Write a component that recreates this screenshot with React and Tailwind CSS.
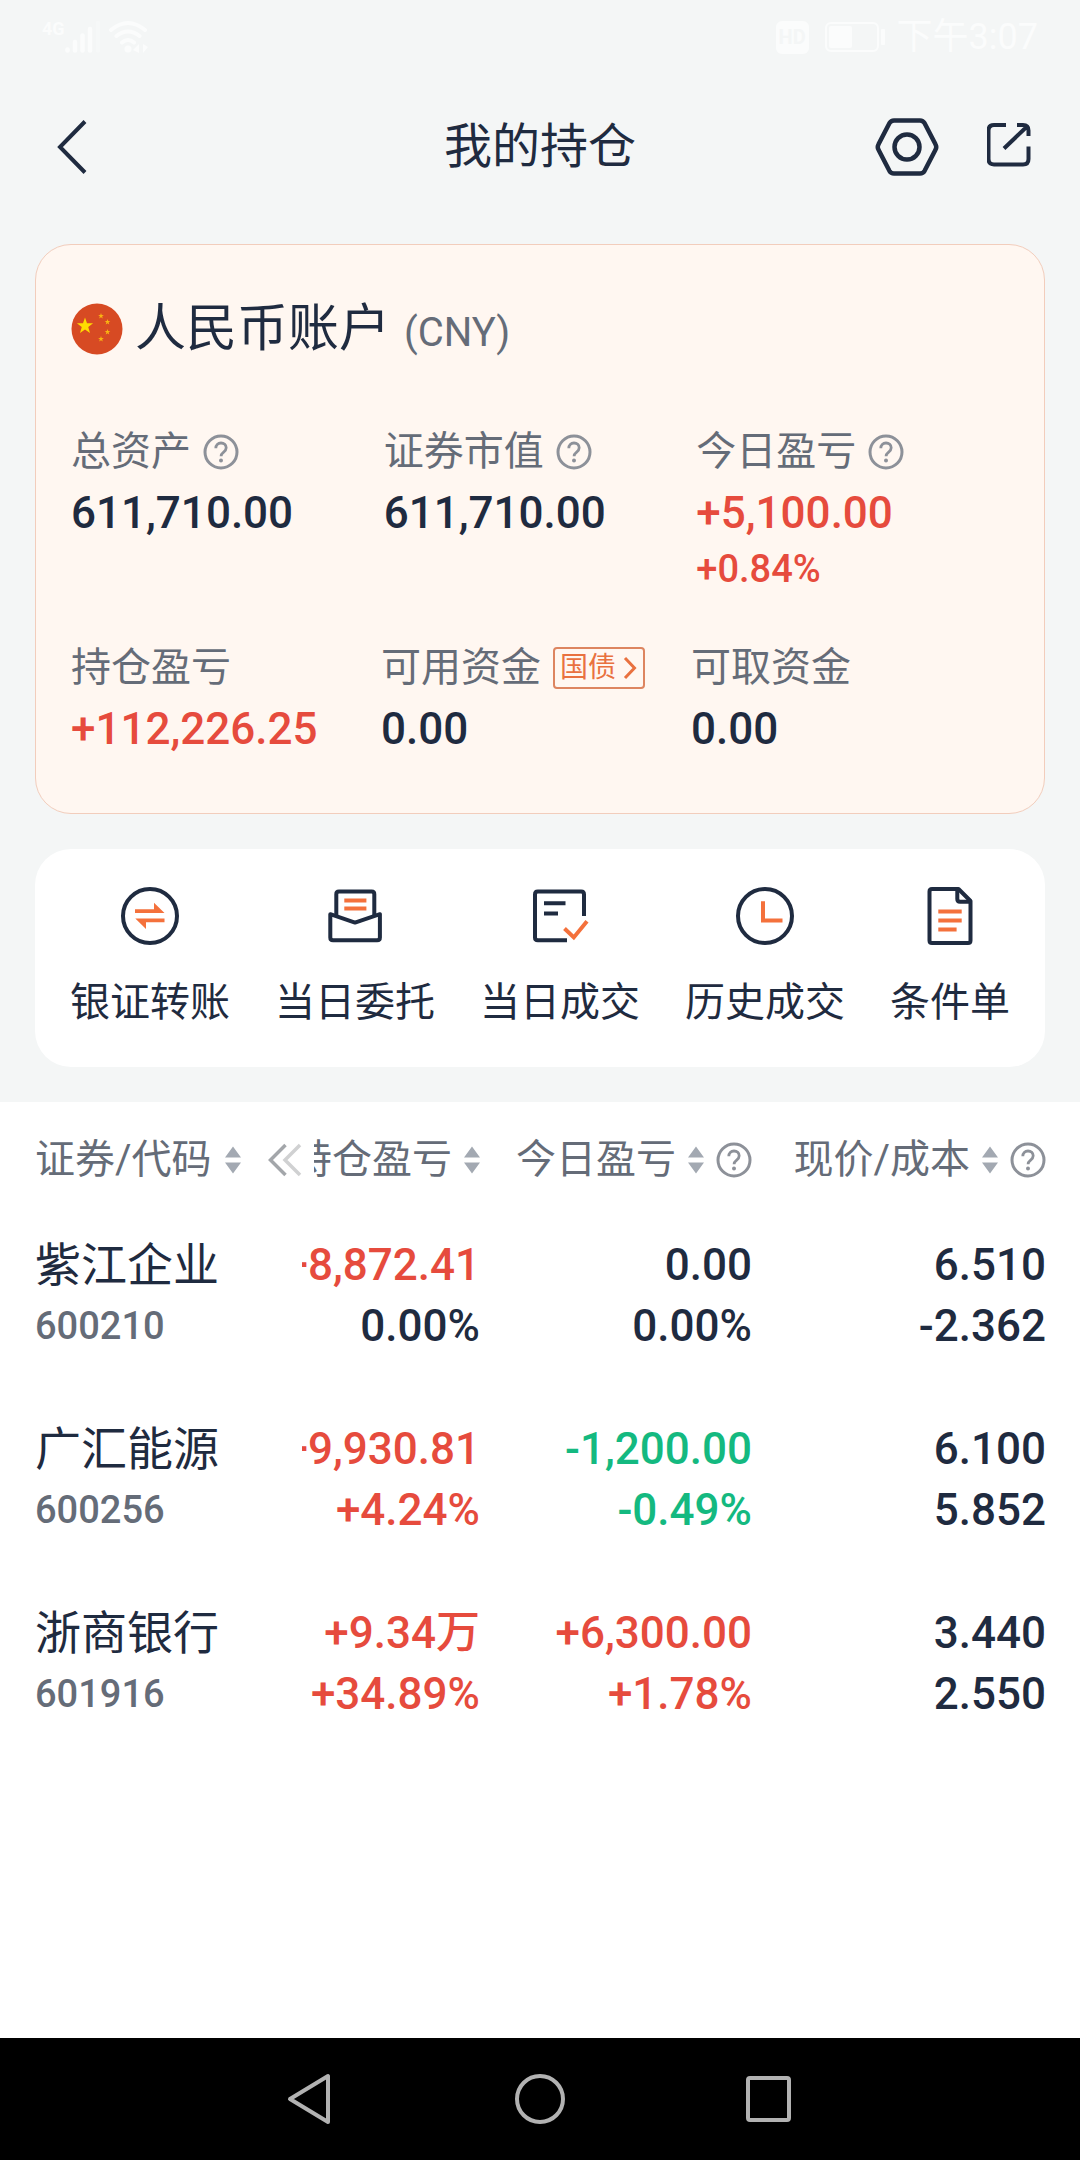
import React from "react";

const metricsTop = [
  { label: "总资产", value: "611,710.00", help: true },
  { label: "证券市值", value: "611,710.00", help: true },
  {
    label: "今日盈亏",
    value: "+5,100.00",
    percent: "+0.84%",
    help: true,
    up: true,
  },
];

const metricsBottom = [
  { label: "持仓盈亏", value: "+112,226.25", up: true },
  { label: "可用资金", value: "0.00", tag: "国债" },
  { label: "可取资金", value: "0.00" },
];

const holdings = [
  {
    name: "紫江企业",
    code: "600210",
    profit: ["+8,872.41", "0.00%"],
    profitColor: ["text-[#e64b3d]", "text-[#1f2b40]"],
    today: ["0.00", "0.00%"],
    todayColor: "text-[#1f2b40]",
    price: ["6.510", "-2.362"],
  },
  {
    name: "广汇能源",
    code: "600256",
    profit: ["+9,930.81", "+4.24%"],
    profitColor: ["text-[#e64b3d]", "text-[#e64b3d]"],
    today: ["-1,200.00", "-0.49%"],
    todayColor: "text-[#14b980]",
    price: ["6.100", "5.852"],
  },
  {
    name: "浙商银行",
    code: "601916",
    profit: ["+9.34万", "+34.89%"],
    profitColor: ["text-[#e64b3d]", "text-[#e64b3d]"],
    today: ["+6,300.00", "+1.78%"],
    todayColor: "text-[#e64b3d]",
    price: ["3.440", "2.550"],
  },
];

const HelpButton = ({ label }) => (
  <button aria-label={`${label}说明`} className="shrink-0 text-[#8d9199]">
    <svg width="36" height="36" viewBox="0 0 36 36" fill="none">
      <circle cx="18" cy="18" r="16" stroke="currentColor" strokeWidth="3" />
      <path
        d="M12.8 14.2c0-3.2 2.2-5.2 5.2-5.2s5.2 2 5.2 4.8c0 2.2-1.2 3.3-2.8 4.5-1.6 1.2-2.3 1.9-2.3 4"
        stroke="currentColor"
        strokeWidth="2.8"
      />
      <circle cx="18" cy="26.6" r="2" fill="currentColor" />
    </svg>
  </button>
);

const SortButton = ({ label }) => (
  <button aria-label={`${label}排序`} className="shrink-0 text-[#a3a9b2]">
    <svg width="16" height="28" viewBox="0 0 16 28" fill="currentColor">
      <path d="M8 0.5 16 11.5H0ZM8 27.5 16 16.5H0Z" />
    </svg>
  </button>
);

const starPoints = (cx, cy, r) =>
  Array.from({ length: 10 }, (_, i) => {
    const radius = i % 2 === 0 ? r : r * 0.4;
    const angle = (Math.PI / 5) * i - Math.PI / 2;
    return `${cx + radius * Math.cos(angle)},${cy + radius * Math.sin(angle)}`;
  }).join(" ");

const Flag = () => (
  <svg width="52" height="52" viewBox="0 0 52 52" className="shrink-0">
    <circle cx="26" cy="26" r="25.5" fill="#d74a23" />
    <g fill="#ffdc00">
      <polygon points={starPoints(14, 23, 8.5)} />
      <polygon points={starPoints(30, 13, 3)} fill="#f9b412" />
      <polygon points={starPoints(36.5, 19, 3)} fill="#f9b412" />
      <polygon points={starPoints(36.5, 29, 3)} fill="#f9b412" />
      <polygon points={starPoints(30, 36, 3)} fill="#f9b412" />
    </g>
  </svg>
);

const ActionSvg = ({ children }) => (
  <svg
    width="60"
    height="60"
    viewBox="0 0 60 60"
    fill="none"
    stroke="#1f2b40"
    strokeWidth="4"
  >
    {children}
  </svg>
);

const actions = [
  {
    label: "银证转账",
    icon: (
      <ActionSvg>
        <circle cx="30" cy="30" r="27" />
        <g fill="#f4713c" stroke="none">
          <path d="M15 23.3H34V16.7L44.5 27H15Z" />
          <path d="M44.5 36.3H26V43L15.3 32.5H44.5Z" />
        </g>
      </ActionSvg>
    ),
  },
  {
    label: "当日委托",
    icon: (
      <ActionSvg>
        <path d="M11.3 29V8.2Q11.3 5.6 13.9 5.6H46.7Q49.3 5.6 49.3 8.2V29" />
        <path
          d="M5.3 28.2 30 36.6 54.9 28.2V51.5Q54.9 54.2 52.2 54.2H8Q5.3 54.2 5.3 51.5Z"
          strokeLinejoin="round"
        />
        <path d="M19.3 14.5H41.4M19.3 22.6H41.4" stroke="#f4713c" />
      </ActionSvg>
    ),
  },
  {
    label: "当日成交",
    icon: (
      <ActionSvg>
        <path d="M37 54.2H7.8Q5 54.2 5 51.4V8.4Q5 5.6 7.8 5.6H51.2Q54 5.6 54 8.4V30" />
        <path d="M14 17.3H35.5M14 27.6H28" />
        <path d="M34.5 42.5 43.8 51.4 57 35.3" stroke="#f4713c" />
      </ActionSvg>
    ),
  },
  {
    label: "历史成交",
    icon: (
      <ActionSvg>
        <circle cx="30" cy="30" r="27" />
        <path d="M28 15.3V34.4H47.5" stroke="#f4713c" />
      </ActionSvg>
    ),
  },
  {
    label: "条件单",
    icon: (
      <ActionSvg>
        <path
          d="M38.5 3H12Q9.5 3 9.5 5.5V54.5Q9.5 57 12 57H48Q50.5 57 50.5 54.5V15Z"
          strokeLinejoin="round"
        />
        <path d="M37.3 3V13Q37.3 15.7 40 15.7H51" />
        <path
          d="M18.3 25.4H41.7M18.3 34.4H41.7M18.3 43.4H36.6"
          stroke="#f4713c"
        />
      </ActionSvg>
    ),
  },
];

const StatusBar = () => (
  <div className="flex h-[74px] items-center justify-between px-[42px] text-[#fbfcfc]">
    <div className="flex items-center gap-2">
      <div className="flex items-start">
        <span className="text-[18px] leading-5 font-bold">4G</span>
        <svg
          width="36"
          height="36"
          viewBox="0 0 36 36"
          stroke="currentColor"
          strokeWidth="4.5"
          strokeLinecap="round"
        >
          <path d="M2.5 31.5V30.5M10 31.5V23M17.5 31.5V16.5M25 31.5V10" />
          <path d="M33 31.5V4" opacity="0.4" />
        </svg>
      </div>
      <svg
        width="40"
        height="36"
        viewBox="0 0 40 36"
        fill="none"
        stroke="currentColor"
        strokeWidth="4"
        strokeLinecap="round"
      >
        <path d="M2 11Q19 -3 36 11M7.5 17Q19 8 30.5 17M13 23.5Q19 18.5 25 23.5" />
        <circle cx="19" cy="30" r="3.5" fill="currentColor" stroke="none" />
        <path
          d="M24 31 30 25V34ZM34 25V34L39 28Z"
          fill="currentColor"
          stroke="none"
        />
      </svg>
    </div>
    <div className="flex items-center gap-4">
      <span className="flex h-[33px] w-[33px] items-center justify-center rounded-md bg-[#fbfcfc] text-[20px] leading-none font-bold text-[#f4f6f6]">
        HD
      </span>
      <svg
        width="60"
        height="30"
        viewBox="0 0 60 30"
        fill="none"
        stroke="currentColor"
      >
        <rect x="1" y="1" width="52" height="28" rx="5" strokeWidth="2" />
        <rect
          x="4"
          y="4"
          width="23"
          height="22"
          rx="2"
          fill="currentColor"
          stroke="none"
        />
        <rect
          x="56"
          y="7"
          width="4"
          height="16"
          rx="1"
          fill="currentColor"
          stroke="none"
        />
      </svg>
      <span className="-ml-1 text-[36px] leading-none">下午3:07</span>
    </div>
  </div>
);

const Metric = ({ item }) => (
  <div>
    <div className="flex h-[62px] items-center gap-3 text-[40px] whitespace-nowrap text-[#656c78]">
      <span>{item.label}</span>
      {item.help && <HelpButton label={item.label} />}
      {item.tag && (
        <button className="flex h-[42px] items-center gap-[6px] rounded-sm border-2 border-[#dd8560] px-[5px] text-[28px] text-[#e9713f]">
          {item.tag}
          <svg
            width="16"
            height="24"
            viewBox="0 0 16 24"
            fill="none"
            stroke="currentColor"
            strokeWidth="3"
          >
            <path d="M3 2 12.5 12 3 22" />
          </svg>
        </button>
      )}
    </div>
    <div
      className={`text-[44px] leading-[60px] font-medium ${
        item.up ? "text-[#e64b3d]" : "text-[#1f2b40]"
      }`}
    >
      {item.value}
    </div>
    {item.percent && (
      <div className="text-[38px] leading-[52px] font-medium text-[#e64b3d]">
        {item.percent}
      </div>
    )}
  </div>
);

const App = () => {
  return (
    <div className="flex min-h-screen flex-col bg-[#f4f6f6] font-['Roboto','Noto_Sans_CJK_SC',sans-serif] text-[#1f2b40]">
      <StatusBar />

      <header className="grid h-[146px] grid-cols-[1fr_auto_1fr] items-center px-[49px]">
        <button aria-label="返回" className="justify-self-start">
          <svg
            width="48"
            height="60"
            viewBox="0 0 48 60"
            fill="none"
            stroke="currentColor"
            strokeWidth="4"
          >
            <path d="M36 4.500 11 30 36 55.500" />
          </svg>
        </button>
        <h1 className="text-[48px] leading-[60px]">我的持仓</h1>
        <div className="flex items-center gap-12 justify-self-end">
          <button aria-label="设置">
            <svg
              width="64"
              height="60"
              viewBox="0 0 64 60"
              fill="none"
              stroke="currentColor"
              strokeWidth="4.500"
            >
              <path
                d="M19 3.500H45Q48 3.500 49.600 6.200L60.500 27.300Q62 30 60.500 32.700L49.600 53.800Q48 56.500 45 56.500H19Q16 56.500 14.400 53.800L3.500 32.700Q2 30 3.500 27.300L14.400 6.200Q16 3.500 19 3.500Z"
                strokeLinejoin="round"
              />
              <circle cx="32" cy="30" r="12.500" />
            </svg>
          </button>
          <button aria-label="分享">
            <svg
              width="44"
              height="50"
              viewBox="0 0 44 50"
              fill="none"
              stroke="currentColor"
              strokeWidth="4"
            >
              <path d="M19 3H7Q1.500 3 1.500 8.500V37Q1.500 42.500 7 42.500H36Q41.500 42.500 41.500 37V24.500" />
              <path d="M30 3H36Q41.500 3 41.500 8.500V14M40 4.500 17 26.500" />
            </svg>
          </button>
        </div>
      </header>

      <section className="mx-[35px] mt-6 rounded-[36px] border border-[#f2cdbc] bg-[#fff7f1] px-[35px] pt-12 pb-[54px]">
        <div className="flex h-[72px] items-center gap-3">
          <Flag />
          <h2 className="flex items-baseline gap-[14px] text-[51px]">
            人民币账户
            <span className="text-[40px] text-[#656c78]">(CNY)</span>
          </h2>
        </div>
        <div className="mt-14 grid grid-cols-3">
          {metricsTop.map((item) => (
            <Metric key={item.label} item={item} />
          ))}
        </div>
        <div className="mt-[42px] grid grid-cols-3 pr-2">
          {metricsBottom.map((item) => (
            <Metric key={item.label} item={item} />
          ))}
        </div>
      </section>

      <nav className="mx-[35px] mt-[35px] flex justify-between rounded-[36px] bg-white px-[35px] pt-[37px] pb-[34px]">
        {actions.map((action) => (
          <button
            key={action.label}
            className="flex flex-col items-center gap-[27px] text-[40px] leading-[60px]"
          >
            {action.icon}
            {action.label}
          </button>
        ))}
      </nav>

      <main className="mt-[35px] flex-1 bg-white pr-[34px]">
        <table className="w-full table-fixed">
          <colgroup>
            <col className="w-[302px]" />
            <col className="w-[178px]" />
            <col className="w-[272px]" />
            <col />
          </colgroup>
          <thead>
            <tr className="h-[102px] text-[40px] leading-[60px] whitespace-nowrap text-[#656c78]">
              <th className="pt-[14px] pl-[35px] font-normal">
                <div className="flex items-center justify-between">
                  <div className="flex items-center gap-[13px]">
                    证券/代码
                    <SortButton label="证券/代码" />
                  </div>
                  <svg
                    width="34"
                    height="34"
                    viewBox="0 0 34 34"
                    fill="none"
                    strokeWidth="3.500"
                  >
                    <path d="M17.500 2 2.500 17 17.500 32" stroke="#a3a6aa" />
                    <path d="M32 2 17 17 32 32" stroke="#d0d1d2" />
                  </svg>
                </div>
              </th>
              <th className="pt-[14px] pl-3 font-normal">
                <div className="flex items-center justify-end gap-3 overflow-hidden">
                  持仓盈亏
                  <SortButton label="持仓盈亏" />
                </div>
              </th>
              <th className="pt-[14px] font-normal">
                <div className="flex items-center justify-end gap-3">
                  今日盈亏
                  <SortButton label="今日盈亏" />
                  <HelpButton label="今日盈亏" />
                </div>
              </th>
              <th className="pt-[14px] font-normal">
                <div className="flex items-center justify-end gap-3">
                  现价/成本
                  <SortButton label="现价/成本" />
                  <HelpButton label="现价/成本" />
                </div>
              </th>
            </tr>
          </thead>
          <tbody>
            {holdings.map((row) => (
              <tr
                key={row.code}
                className="h-[184px] text-right text-[44px] leading-[61px] font-medium whitespace-nowrap"
              >
                <td className="pl-[35px] text-left font-normal">
                  <div className="text-[46px]">{row.name}</div>
                  <div className="text-[38px] font-medium text-[#656c78]">
                    {row.code}
                  </div>
                </td>
                <td>
                  {row.profit.map((text, i) => (
                    <div
                      key={text}
                      className={`flex justify-end overflow-hidden ${row.profitColor[i]}`}
                    >
                      {text}
                    </div>
                  ))}
                </td>
                <td className={row.todayColor}>
                  <div>{row.today[0]}</div>
                  <div>{row.today[1]}</div>
                </td>
                <td>
                  <div>{row.price[0]}</div>
                  <div>{row.price[1]}</div>
                </td>
              </tr>
            ))}
          </tbody>
        </table>
      </main>

      <footer className="flex h-[122px] items-center justify-center gap-[177px] bg-black text-[#b2b2b2]">
        <button aria-label="后退">
          <svg
            width="52"
            height="52"
            viewBox="0 0 52 52"
            fill="none"
            stroke="currentColor"
            strokeWidth="4"
            strokeLinejoin="round"
          >
            <path d="M43 3V49L5 26Z" />
          </svg>
        </button>
        <button aria-label="主屏幕">
          <svg
            width="52"
            height="52"
            viewBox="0 0 52 52"
            fill="none"
            stroke="currentColor"
            strokeWidth="4"
          >
            <circle cx="26" cy="26" r="23" />
          </svg>
        </button>
        <button aria-label="最近任务">
          <svg
            width="52"
            height="52"
            viewBox="0 0 52 52"
            fill="none"
            stroke="currentColor"
            strokeWidth="4"
          >
            <rect x="5" y="5" width="41" height="42" rx="2" />
          </svg>
        </button>
      </footer>
    </div>
  );
};

export default App;
